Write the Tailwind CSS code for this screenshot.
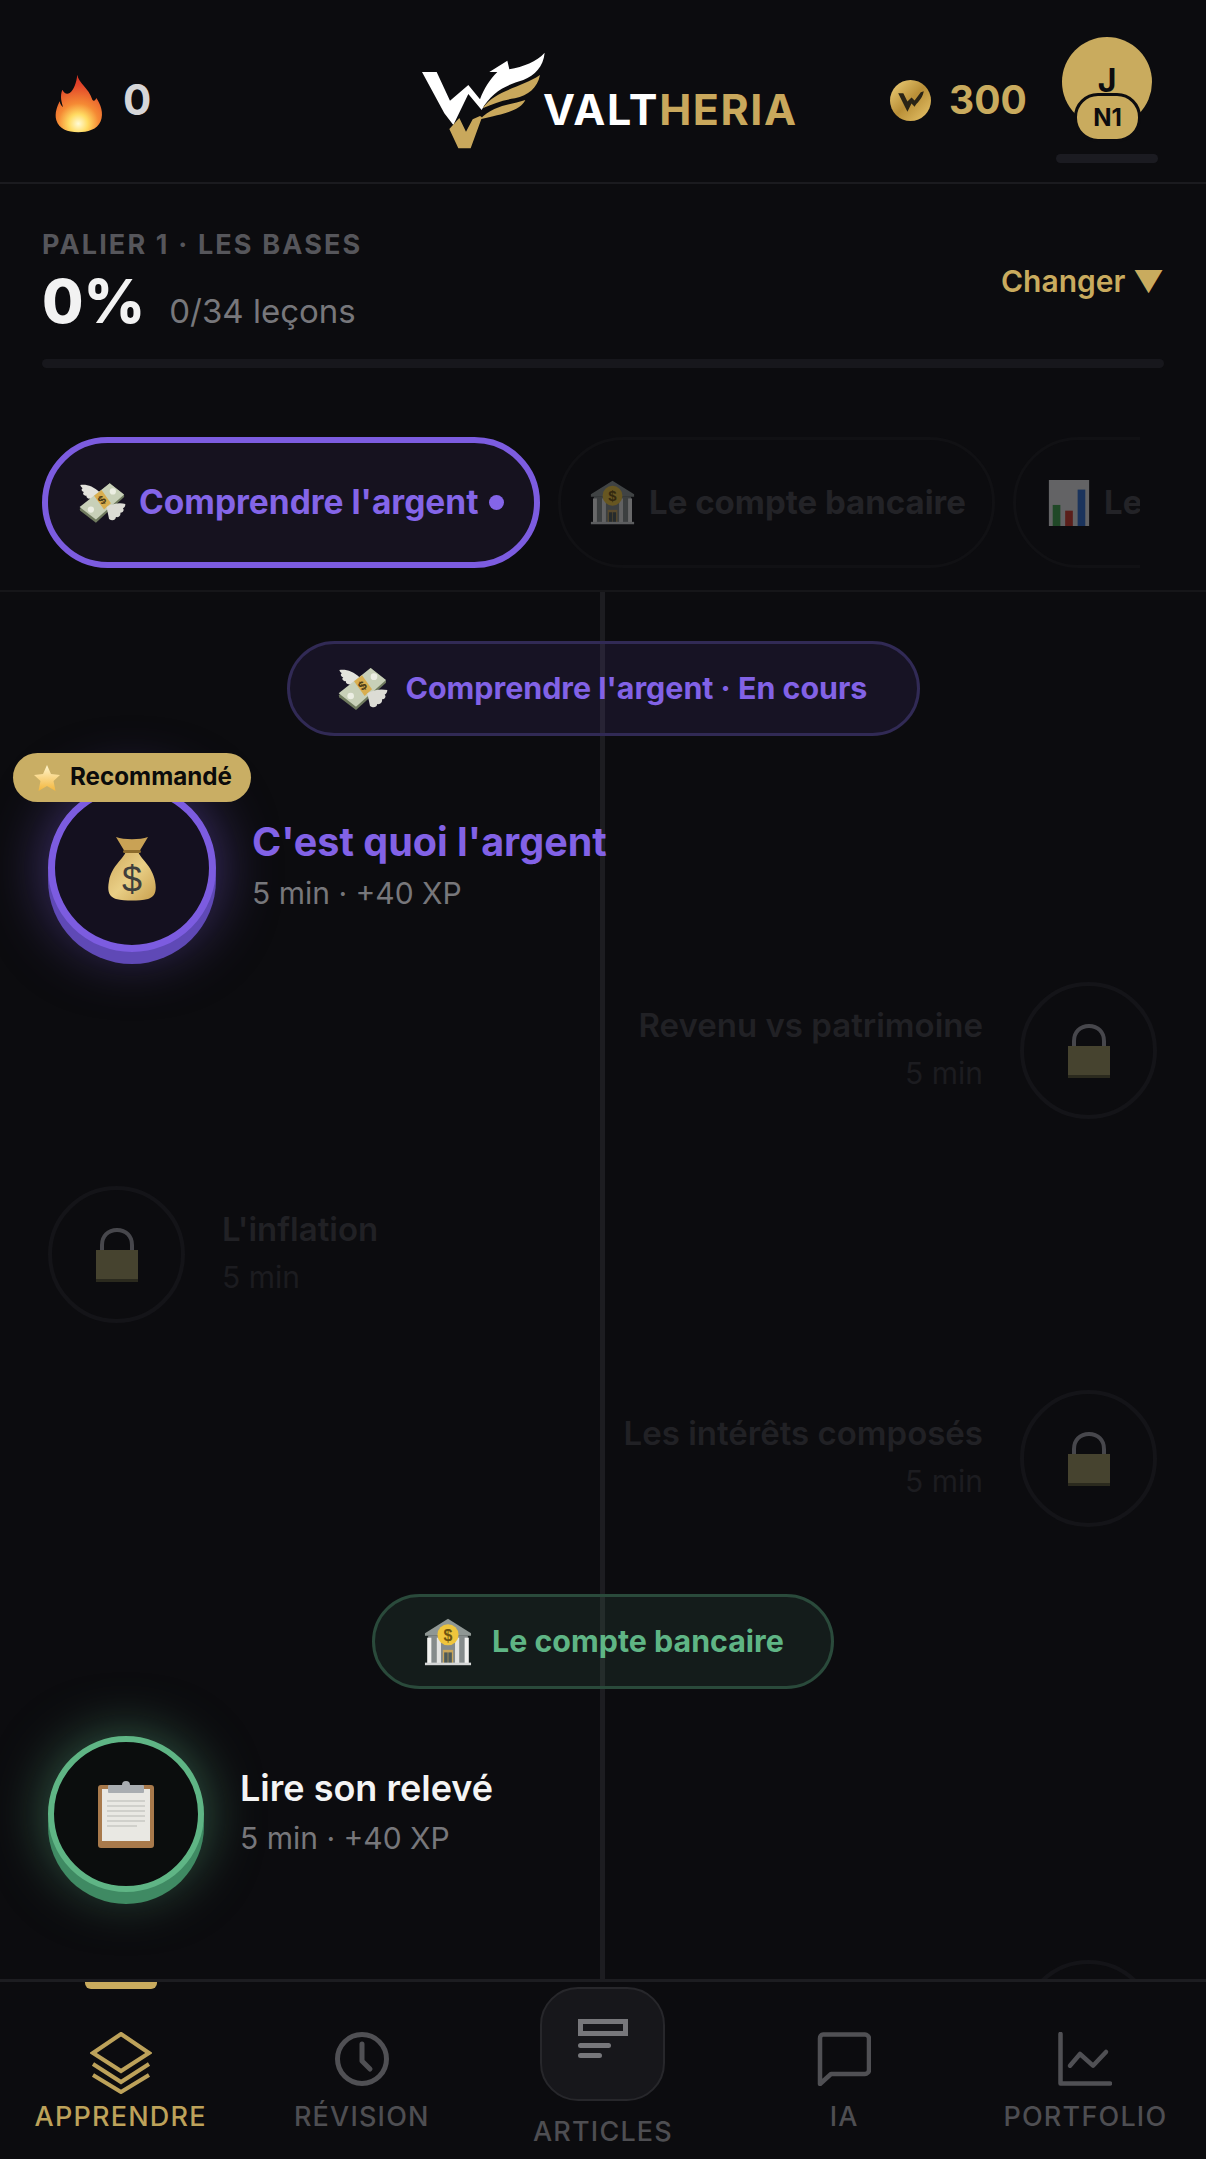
<!DOCTYPE html>
<html lang="fr">
<head>
  <meta charset="UTF-8">
  <title>Valtheria</title>
  <script src="https://cdn.jsdelivr.net/npm/@tailwindcss/browser@4"></script>
</head>
<body class="bg-[#0c0c0f] font-['Inter','Noto_Sans',sans-serif]">
  <!-- emoji drawings, reused below -->
  <svg class="absolute w-0 h-0" aria-hidden="true">
    <defs>
      <radialGradient id="flameG" gradientUnits="userSpaceOnUse" cx="118" cy="182" r="145">
        <stop offset="0" stop-color="#fffbd6"/><stop offset="0.2" stop-color="#ffdb62"/><stop offset="0.42" stop-color="#f58a34"/><stop offset="0.8" stop-color="#e2452a"/><stop offset="1" stop-color="#d93424"/>
      </radialGradient>
      <linearGradient id="bagG" x1="0" y1="0" x2="1" y2="1"><stop offset="0" stop-color="#cfa95d"/><stop offset="0.5" stop-color="#e9cf86"/><stop offset="1" stop-color="#c9a04e"/></linearGradient>
      <linearGradient id="coinG" x1="0" y1="0" x2="1" y2="1"><stop offset="0" stop-color="#f0d27c"/><stop offset="0.5" stop-color="#b98f37"/><stop offset="1" stop-color="#e9c66c"/></linearGradient>
      <linearGradient id="starG" x1="0" y1="0" x2="0" y2="1"><stop offset="0" stop-color="#fff6cf"/><stop offset="1" stop-color="#f3b63c"/></linearGradient>
      <symbol id="flame" viewBox="45 30 150 180">
        <path d="M115 35C118 60 150 75 160 110C165 118 170 110 172 105C185 125 195 150 185 175C175 200 145 208 118 208C85 208 60 198 52 172C46 150 55 130 62 115C64 125 68 130 72 132C68 118 62 100 70 80C76 90 82 95 92 90C105 80 112 60 115 35Z" fill="url(#flameG)"/>
      </symbol>
      <symbol id="moneyWings" viewBox="24 30 150 135">
        <path d="M90 65C70 45 45 38 28 42C30 48 33 50 36 52C30 54 32 62 40 64C34 68 38 76 48 76C46 84 58 88 70 85Z" fill="#e3e3dc"/>
        <path d="M26 118L122 36L168 74V80L78 162L28 124Z" fill="#6f7a5e"/>
        <path d="M26 112L122 36L168 72L78 152Z" fill="#c8d0b8"/>
        <circle cx="132" cy="62" r="10" fill="#eceee3"/>
        <circle cx="62" cy="120" r="10" fill="#eceee3"/>
        <path d="M72 76L96 58L126 100L104 120Z" fill="#d9ae4f"/>
        <text x="98" y="102" font-size="38" font-weight="700" text-anchor="middle" fill="#4b3c17" font-family="Liberation Sans" transform="rotate(-40 98 90)">$</text>
        <path d="M112 112C130 100 155 98 172 102C172 110 168 114 164 116C170 122 164 130 156 130C158 140 150 146 142 144C140 156 128 156 120 150Z" fill="#dcdcd5"/>
      </symbol>
      <symbol id="bank" viewBox="25 25 150 145">
        <path d="M100 25L172 70V78H28V70Z" fill="#8f9794"/>
        <rect x="38" y="78" width="124" height="86" fill="#858b8b"/>
        <rect x="35" y="84" width="13" height="80" fill="#f2f2f0"/><rect x="65" y="84" width="13" height="80" fill="#e3e4e2"/>
        <rect x="122" y="84" width="13" height="80" fill="#e3e4e2"/><rect x="152" y="84" width="13" height="80" fill="#f2f2f0"/>
        <rect x="84" y="122" width="32" height="42" fill="#c9a65a"/>
        <rect x="88" y="130" width="11" height="34" fill="#4d5a5a"/><rect x="101" y="130" width="11" height="34" fill="#4d5a5a"/>
        <rect x="28" y="162" width="144" height="8" fill="#d5d7d7"/>
        <circle cx="100" cy="75" r="33" fill="#efc53c"/>
        <text x="100" y="93" font-size="50" font-weight="700" text-anchor="middle" fill="#6d5410" font-family="Liberation Sans">$</text>
      </symbol>
      <symbol id="chart" viewBox="0 0 42 48">
        <rect width="42" height="48" fill="#e6e6e6"/>
        <rect x="4" y="26" width="8" height="22" fill="#3fa34d"/>
        <rect x="17" y="32" width="8" height="16" fill="#d0392b"/>
        <rect x="30" y="10" width="8" height="38" fill="#2f6fd0"/>
      </symbol>
      <symbol id="star" viewBox="0 0 28 28">
        <path d="M14 1L18 10L27 11L20.500 17L22.500 27L14 22L5.500 27L7.500 17L1 11L10 10Z" fill="url(#starG)"/>
      </symbol>
      <symbol id="bag" viewBox="0 0 48 66">
        <path d="M18 16C16 24 4 30 1 46C-1 56 1 62 8 64C18 66 30 66 40 64C47 62 49 56 47 46C44 30 32 24 30 16Z" fill="url(#bagG)"/>
        <path d="M8 2C16 5 32 5 40 2L31 17H17Z" fill="#c9a255"/>
        <rect x="15" y="15" width="18" height="3" rx="1.500" fill="#8d6c2c"/>
        <text x="24" y="57" font-size="36" font-weight="400" text-anchor="middle" fill="#3f3f3c" font-family="Liberation Sans">$</text>
      </symbol>
      <symbol id="lock" viewBox="0 0 42 54">
        <path d="M6 24V17C6 8 12 2 21 2C30 2 36 8 36 17V24" fill="none" stroke="#47474c" stroke-width="4"/>
        <rect x="0" y="22" width="42" height="29" fill="#46432f"/>
        <rect x="0" y="51" width="42" height="3" fill="#2b2a1e"/>
      </symbol>
      <symbol id="clipboard" viewBox="0 0 58 68">
        <rect x="1" y="5" width="56" height="63" rx="3" fill="#a8794b"/>
        <rect x="5" y="9" width="48" height="52" fill="#e9e8e3"/>
        <rect x="11" y="5" width="36" height="8" rx="1" fill="#a9adb1"/>
        <circle cx="29" cy="5" r="4" fill="#a9adb1"/>
        <path d="M10 21H48M10 26H48M10 31H48M10 36H48M10 41H48M10 46H40" stroke="#c8c8c4" stroke-width="1.500"/>
      </symbol>
    </defs>
  </svg>

  <div class="w-[1206px] h-[2159px] overflow-hidden flex flex-col">
    <!-- Header -->
    <header class="h-[184px] shrink-0 border-b-2 border-[#1b1b1f] flex items-start relative">
      <div class="flex items-center pl-[54px] pt-[72px] w-[420px]">
        <svg class="w-[50px] h-[60px]"><use href="#flame"/></svg>
        <span class="ml-[19px] mb-[6px] text-[42px] leading-[56px] font-bold text-[#d6d6d8]">0</span>
      </div>
      <!-- logo -->
      <div class="flex items-start pt-[50px] w-[470px]">
        <svg class="w-[125px] h-[100px]" viewBox="60 60 375 300">
          <path d="M66 126H110L150 212L205 165L240 208C252 175 270 148 292 126H268L322 92L328 118C370 110 410 95 434 68C430 110 405 135 370 150C320 165 275 185 245 240L205 192L160 285L133 250Z" fill="#fff"/>
          <path d="M248 235C285 180 360 175 420 135C412 175 385 195 345 205C310 210 280 220 248 235Z" fill="#c9a85c"/>
          <path d="M240 268C280 225 330 225 376 210C362 240 320 250 240 268Z" fill="#c9a85c"/>
          <path d="M148 297L178 264L198 305L218 268L240 258L246 262L212 355H175Z" fill="#c9a85c"/>
        </svg>
        <div class="mt-[33px] -ml-[2px] text-[43px] leading-[52px] font-bold tracking-[1.550px] text-white">VALT<span class="text-[#c9a85c]">HERIA</span></div>
      </div>
      <div class="flex items-center pt-[72px]">
        <svg class="w-[41px] h-[41px]" viewBox="0 0 40 40">
          <circle cx="20" cy="20" r="20" fill="url(#coinG)"/>
          <path d="M8 13H13L17 21L21 17L24 20L30 12L33 11C31 20 26 22 24 26L21 23L17 31Z" fill="#2a2416"/>
        </svg>
        <span class="ml-[18px] text-[39px] leading-[56px] font-bold text-[#c9ab5e]">300</span>
      </div>
      <!-- avatar -->
      <div class="absolute left-[1062px] top-[37px] w-[90px] h-[90px] rounded-full bg-[#c9ab5e] flex justify-center">
        <span class="mt-[28px] text-[32px] leading-[32px] font-bold text-[#0c0c0f]">J</span>
      </div>
      <div class="absolute left-[1074px] top-[93px] w-[67px] h-[49px] rounded-[24px] border-[3px] border-[#0c0c0f] bg-[#c9ab5e] flex items-center justify-center text-[24px] font-bold text-[#0c0c0f]">N1</div>
      <div class="absolute left-[1056px] top-[154px] w-[102px] h-[9px] rounded-full bg-[#1b1b21]"></div>
    </header>

    <!-- Tier summary -->
    <section class="px-[42px] pt-[45px] shrink-0">
      <div class="flex items-start justify-between">
        <div>
          <div class="text-[27px] leading-[32px] font-bold tracking-[2.150px] text-[#56565b]">PALIER 1 · LES BASES</div>
          <div class="mt-[10px] flex items-baseline h-[60px]">
            <span class="text-[60px] leading-[60px] font-extrabold text-[#f2f2f2]">0%</span>
            <span class="ml-[24px] text-[33px] font-normal text-[#77777b]">0/34 leçons</span>
          </div>
        </div>
        <div class="mt-[27px] text-[30px] leading-[50px] font-semibold text-[#c9ab5e]">Changer ▼</div>
      </div>
      <div class="mt-[28px] h-[9px] rounded-full bg-[#17171c]"></div>
    </section>

    <!-- Chapter tabs -->
    <div class="shrink-0 border-b-2 border-[#161619] h-[224px]">
      <div class="relative mt-[69px] ml-[42px] w-[1098px] overflow-hidden flex gap-[18px]">
        <div class="shrink-0 w-[498px] h-[131px] rounded-full border-[6px] border-[#7c5ce0] bg-[#16121f] flex items-center pl-[31px]">
          <svg class="w-[47px] h-[45px]"><use href="#moneyWings"/></svg>
          <span class="ml-[13px] text-[33.500px] font-bold text-[#8465e8]">Comprendre l'argent</span>
          <span class="ml-[11px] w-[15px] h-[15px] rounded-full bg-[#8465e8]"></span>
        </div>
        <div class="shrink-0 w-[437px] h-[131px] rounded-full border-[3px] border-[#111114] flex items-center pl-[29px]">
          <svg class="w-[45px] h-[45px] opacity-40"><use href="#bank"/></svg>
          <span class="ml-[14px] text-[33px] font-bold text-[#232327]">Le compte bancaire</span>
        </div>
        <div class="shrink-0 w-[300px] h-[131px] rounded-full border-[3px] border-[#111114] flex items-center pl-[32px]">
          <svg class="w-[42px] h-[46px] opacity-40"><use href="#chart"/></svg>
          <span class="ml-[14px] text-[33px] font-bold text-[#232327]">Le</span>
        </div>
      </div>
    </div>

    <!-- Lesson path -->
    <main class="relative flex-1 min-h-0 overflow-hidden px-[48px] flex flex-col">
      <div class="absolute left-[600px] top-0 bottom-0 w-[5px] bg-[#1d1d21]"></div>

      <div class="relative mt-[49px] self-center w-[633px] h-[95px] shrink-0 rounded-full border-[3px] border-[#312a55] bg-[#7c5ce0]/10 flex items-center pl-[48px]">
        <svg class="w-[50px] h-[45px]"><use href="#moneyWings"/></svg>
        <span class="ml-[18px] text-[30.400px] font-bold text-[#8262e6]">Comprendre l'argent · En cours</span>
      </div>

      <!-- current lesson -->
      <div class="relative mt-[48px] flex items-center shrink-0">
        <div class="relative w-[168px] h-[168px] rounded-full border-[7px] border-[#7c5ce0] bg-[#14101f] shadow-[0_12px_0_#5f49b6,0_0_60px_rgba(124,92,224,0.5)] flex items-center justify-center">
          <svg class="w-[48px] h-[66px]"><use href="#bag"/></svg>
          <div class="absolute -left-[42px] -top-[38px] w-[238px] h-[49px] rounded-full bg-[#c9ae64] flex items-center pl-[20px]">
            <svg class="w-[28px] h-[28px]"><use href="#star"/></svg>
            <span class="ml-[9px] text-[24.200px] font-bold text-[#0b0b0b]">Recommandé</span>
          </div>
        </div>
        <div class="ml-[36px] mb-[2px] relative">
          <div class="text-[39.500px] leading-[50px] font-bold text-[#8262e6]">C'est quoi l'argent</div>
          <div class="text-[30px] leading-[50px] mt-[1px] text-[#77777b]">5 min · +40 XP</div>
        </div>
      </div>

      <!-- locked lessons -->
      <div class="relative mt-[30px] flex items-center justify-end gap-[37px] shrink-0 pr-[1px]">
        <div class="text-right mb-[4px]">
          <div class="text-[33px] leading-[48px] font-semibold text-[#212125]">Revenu vs patrimoine</div>
          <div class="text-[30px] leading-[48px] text-[#1c1c20]">5 min</div>
        </div>
        <div class="w-[137px] h-[137px] rounded-full border-[4px] border-[#141418] flex items-center justify-center">
          <svg class="w-[42px] h-[54px]"><use href="#lock"/></svg>
        </div>
      </div>

      <div class="relative mt-[67px] flex items-center gap-[37px] shrink-0">
        <div class="w-[137px] h-[137px] rounded-full border-[4px] border-[#141418] flex items-center justify-center">
          <svg class="w-[42px] h-[54px]"><use href="#lock"/></svg>
        </div>
        <div class="mb-[4px]">
          <div class="text-[33px] leading-[48px] font-semibold text-[#212125]">L'inflation</div>
          <div class="text-[30px] leading-[48px] text-[#1c1c20]">5 min</div>
        </div>
      </div>

      <div class="relative mt-[67px] flex items-center justify-end gap-[37px] shrink-0 pr-[1px]">
        <div class="text-right mb-[4px]">
          <div class="text-[33px] leading-[48px] font-semibold text-[#212125]">Les intérêts composés</div>
          <div class="text-[30px] leading-[48px] text-[#1c1c20]">5 min</div>
        </div>
        <div class="w-[137px] h-[137px] rounded-full border-[4px] border-[#141418] flex items-center justify-center">
          <svg class="w-[42px] h-[54px]"><use href="#lock"/></svg>
        </div>
      </div>

      <div class="relative mt-[67px] self-center w-[462px] h-[95px] shrink-0 rounded-full border-[3px] border-[#2a4a3b] bg-[#5fb585]/10 flex items-center pl-[49px]">
        <svg class="w-[48px] h-[48px]"><use href="#bank"/></svg>
        <span class="ml-[20px] text-[30.400px] font-bold text-[#5fb585]">Le compte bancaire</span>
      </div>

      <div class="relative mt-[47px] flex items-center shrink-0">
        <div class="w-[156px] h-[156px] rounded-full border-[6px] border-[#5fb585] bg-[#0b0d0d] shadow-[0_12px_0_#3f8a63,0_0_55px_rgba(95,181,133,0.5)] flex items-center justify-center">
          <svg class="w-[58px] h-[68px]"><use href="#clipboard"/></svg>
        </div>
        <div class="ml-[36px] mb-[2px]">
          <div class="text-[36px] leading-[50px] font-semibold text-[#f4f4f4]">Lire son relevé</div>
          <div class="text-[30px] leading-[50px] text-[#77777b]">5 min · +40 XP</div>
        </div>
      </div>

      <div class="relative mt-[68px] flex justify-end shrink-0 pr-[1px]">
        <div class="w-[137px] h-[137px] rounded-full border-[4px] border-[#141418]"></div>
      </div>
    </main>

    <!-- Bottom nav -->
    <nav class="h-[180px] shrink-0 border-t-[3px] border-[#1d1d21] bg-[#0c0c0f] grid grid-cols-5 text-[27px] font-medium tracking-[1.200px] text-[#4e4e52]">
      <a class="relative flex flex-col items-center pt-[50px] text-[#bda25a]">
        <span class="absolute left-[85px] top-0 w-[72px] h-[7px] rounded-b-[6px] bg-[#c9ab5e]"></span>
        <svg class="w-[62px] h-[62px]" viewBox="0 0 62 62" fill="none" stroke="#bda25a" stroke-width="4">
          <path d="M31 2L59 21L31 39L3 21Z"/>
          <path d="M3 32L31 50L59 32"/>
          <path d="M3 43L31 60L59 43"/>
        </svg>
        <span class="mt-[5px] leading-[36px]">APPRENDRE</span>
      </a>
      <a class="flex flex-col items-center pt-[50px]">
        <svg class="w-[54px] h-[54px]" viewBox="0 0 54 54" fill="none" stroke="#505054" stroke-width="5" stroke-linecap="round" stroke-linejoin="round">
          <circle cx="27" cy="27" r="24.500"/>
          <path d="M27 12V29L35 37"/>
        </svg>
        <span class="mt-[13px] leading-[36px]">RÉVISION</span>
      </a>
      <a class="flex flex-col items-center">
        <span class="mt-[5px] w-[125px] h-[114px] rounded-[38px] border-2 border-[#27272b] bg-[#17171b] flex items-start justify-center pt-[30px]">
          <svg class="w-[50px] h-[40px]" viewBox="0 0 50 40" fill="none">
            <rect x="2.500" y="2.500" width="45" height="12" stroke="#77777b" stroke-width="5"/>
            <rect x="0" y="24" width="33" height="5" rx="2.500" fill="#77777b"/>
            <rect x="0" y="34" width="24" height="5" rx="2.500" fill="#77777b"/>
          </svg>
        </span>
        <span class="mt-[13px] leading-[36px]">ARTICLES</span>
      </a>
      <a class="flex flex-col items-center pt-[50px]">
        <svg class="w-[54px] h-[54px]" viewBox="0 0 54 54" fill="none" stroke="#505054" stroke-width="4.500" stroke-linecap="round" stroke-linejoin="round">
          <path d="M6 2.500H48C50 2.500 52 4.500 52 6.500V38C52 40 50 42 48 42H14L3 52V6.500C3 4.500 4 2.500 6 2.500Z"/>
        </svg>
        <span class="mt-[13px] leading-[36px]">IA</span>
      </a>
      <a class="flex flex-col items-center pt-[50px]">
        <svg class="w-[54px] h-[54px]" viewBox="0 0 54 54" fill="none" stroke="#505054" stroke-width="4.500" stroke-linecap="round" stroke-linejoin="round">
          <path d="M2.500 2V51.500H52"/>
          <path d="M12 33.700L22 22L35 33.700L48 20"/>
        </svg>
        <span class="mt-[13px] leading-[36px]">PORTFOLIO</span>
      </a>
    </nav>
  </div>
</body>
</html>
